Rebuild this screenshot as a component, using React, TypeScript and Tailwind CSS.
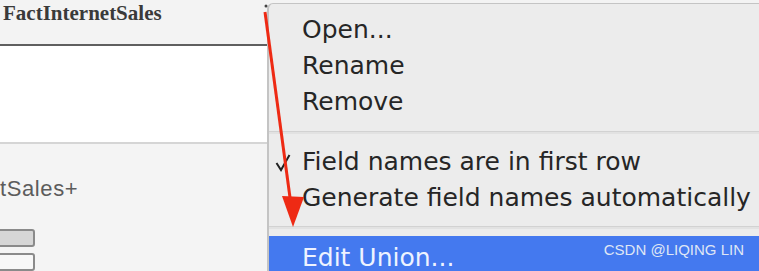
import React from 'react';

const menuFont = { fontFamily: '"DejaVu Sans", "Open Sans", sans-serif' };

function MenuItem({ label, checked }: { label: string; checked?: boolean }) {
  return (
    <div className="relative flex h-[36px] items-center pl-[33px] text-[25px] text-[#262626]">
      {checked && (
        <svg className="absolute left-[6px] top-[10px]" width="16" height="18" viewBox="0 0 16 18">
          <path d="M1.5 9 L6 16 L14.5 1" fill="none" stroke="#222" strokeWidth="2" />
        </svg>
      )}
      {label}
    </div>
  );
}

export default function App() {
  return (
    <div className="relative flex h-[271px] w-[759px] overflow-hidden bg-[#f3f3f3]" style={menuFont}>
      {/* data source panel behind the menu */}
      <div className="flex w-[267px] shrink-0 flex-col">
        <div className="h-[44px] bg-[#f3f3f3] pl-[3px]">
          <span
            className="text-[21px] font-bold leading-[26px] text-[#3a3a3a]"
            style={{ fontFamily: '"Liberation Serif", serif' }}
          >
            FactInternetSales
          </span>
        </div>
        <div className="h-[2px] bg-[#5f5f5f]" />
        <div className="h-[96px] bg-white" />
        <div className="h-[2px] bg-[#d5d5d5]" />
        <div className="flex-1 bg-[#f4f4f4]">
          <div
            className="mt-[28px] text-[22px] tracking-[0.6px] text-[#5c5c5c]"
            style={{ fontFamily: '"Liberation Sans", sans-serif' }}
          >
            tSales+
          </div>
          <div className="mt-[24px] flex flex-col gap-[6px]">
            <div className="ml-[-6px] h-[18px] w-[41px] rounded-[3px] border-2 border-[#8a8a8a] bg-[#d6d6d6]" />
            <div className="ml-[-6px] h-[18px] w-[41px] rounded-[3px] border-2 border-[#8a8a8a] bg-[#f7f7f7]" />
          </div>
        </div>
      </div>

      {/* context menu */}
      <div className="mt-[3px] flex-1 rounded-tl-[6px] border-l-2 border-t border-[#c4c4c4] bg-[#ececec] pt-[8px]">
        <MenuItem label="Open..." />
        <MenuItem label="Rename" />
        <MenuItem label="Remove" />
        <div className="mb-[10px] mt-[11px] h-[3px] border-t border-[#d2d2d2] bg-[#e2e2e2]" />
        <MenuItem label="Field names are in first row" checked />
        <MenuItem label="Generate field names automatically" />
        <div className="mb-[7px] mt-[10px] h-[3px] border-t border-[#d2d2d2] bg-[#e2e2e2]" />
        <div className="relative flex h-[40px] items-center bg-[#4479ef] pl-[33px] pt-[3px] text-[25px] text-[#eef3ff]">
          Edit Union...
          <span
            className="absolute right-[15px] top-[3px] text-[15px] text-[#dfe6f5]"
            style={{ fontFamily: '"Liberation Sans", sans-serif' }}
          >
            CSDN @LIQING LIN
          </span>
        </div>
      </div>

      {/* red annotation arrow */}
      <svg className="pointer-events-none absolute left-0 top-0" width="759" height="271">
        <circle cx="266" cy="6" r="1.5" fill="#444" />
        <line x1="265" y1="12" x2="291" y2="205" stroke="#ee2a14" strokeWidth="3" />
        <polygon points="282,196 304,197 293,227" fill="#ee2a14" />
      </svg>
    </div>
  );
}
